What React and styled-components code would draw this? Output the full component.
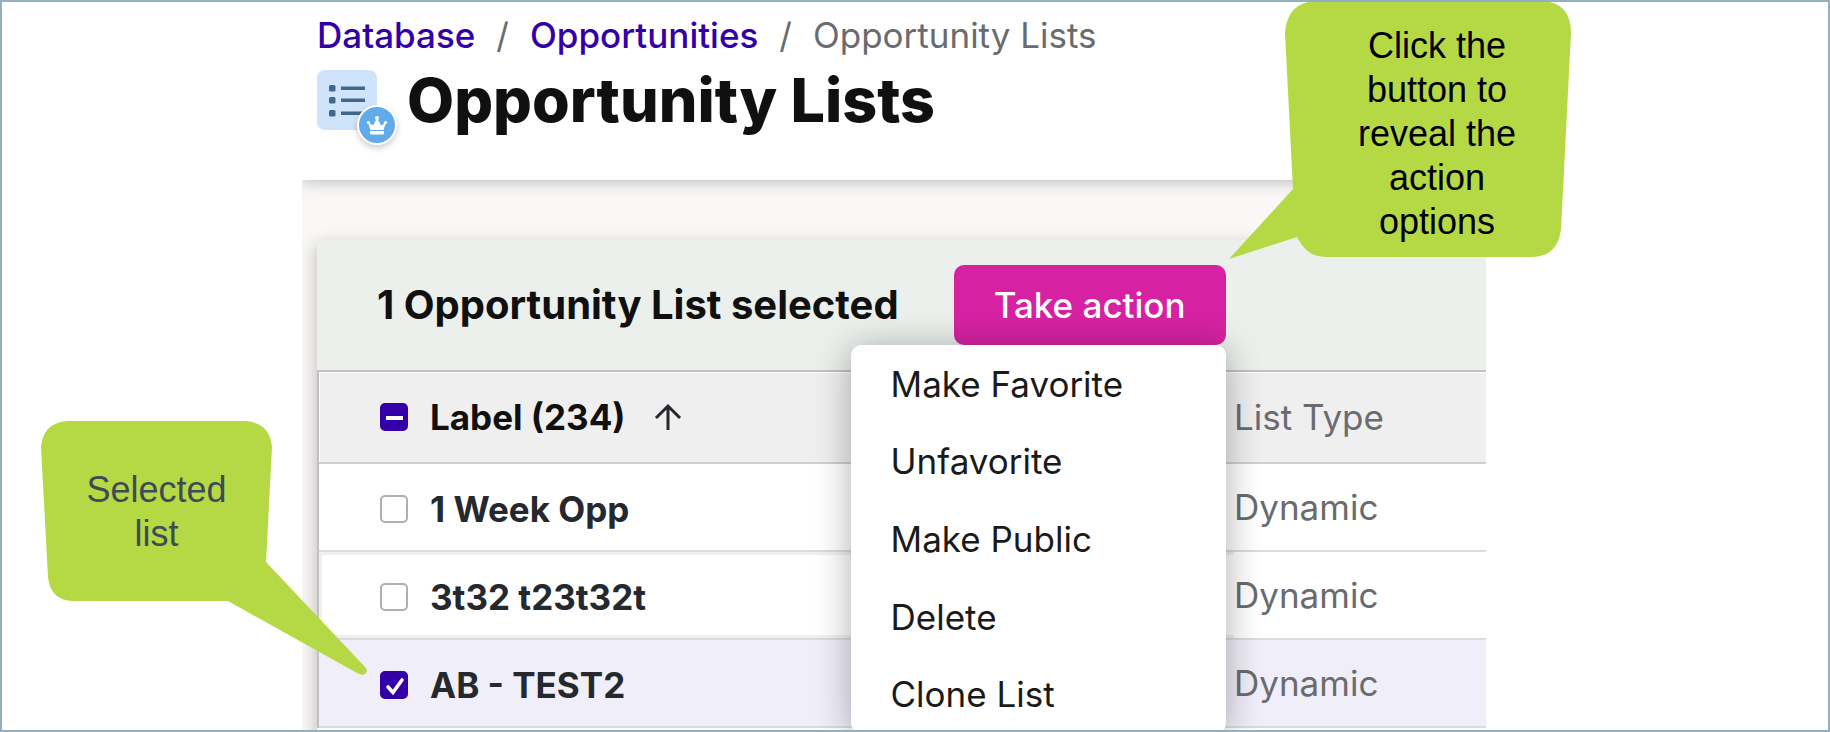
// App.jsx

import React, { useEffect, useRef, useState } from 'react';
import styled, { createGlobalStyle, css } from 'styled-components';

const GlobalStyle = createGlobalStyle`
    *, *::before, *::after { box-sizing: border-box; }
    body { margin: 0; background: #fff; font-family: Inter, "Liberation Sans", sans-serif; font-size: 35px; line-height: 44px; }
    button, input { font: inherit; }
`;

const Page = styled.div` position: relative; display: grid; grid-template-columns: 300px minmax(0, 1fr) 342px; height: 100vh; overflow: hidden; background: #fff; border: 2px solid #93b0bf; `;
const Screen = styled.main` grid-column: 2; min-width: 0; height: 100%; overflow: hidden; display: flex; flex-direction: column; `;

const Header = styled.header` position: relative; z-index: 1; flex: none; min-height: 178px; padding: 11px 15px 0; background: #fff; box-shadow: 0 0 16px rgba(0, 0, 0, 0.3); `;
const Breadcrumbs = styled.nav` display: flex; gap: 21px; color: #6a6b6f; white-space: nowrap; `;
const Crumb = styled.a` color: #3300a8; font-weight: 500; text-decoration: none; `;
const TitleRow = styled.div` display: flex; align-items: center; gap: 30px; margin-top: 13px; `;
const Title = styled.h1` margin: 0; color: #101010; font-size: 61px; line-height: 60px; font-weight: 800; white-space: nowrap; `;
const ListBadge = styled.div` position: relative; width: 60px; height: 60px; border-radius: 8px; background: #cfe4fa; `;
const Crown = styled.span` position: absolute; right: -20px; bottom: -15px; width: 40px; height: 40px; border: 2px solid #fff; border-radius: 50%; background: #62abea; box-shadow: 0 3px 6px rgba(0, 0, 0, 0.2); `;

const Content = styled.div` flex: 1 0 auto; padding: 60px 0 0 15px; background: #f9f8f6; `;
const Panel = styled.section` padding-bottom: 20px; background: #fff; box-shadow: 0 6px 16px rgba(40, 20, 20, 0.3); `;
const ActionBar = styled.div` display: flex; align-items: center; gap: 55px; height: 130px; padding: 0 60px; background: #ebf0ec; `;
const SelectionTitle = styled.h2` margin: 0; color: #101010; font-size: 40px; line-height: 44px; font-weight: 700; white-space: nowrap; `;
const ActionWrap = styled.div` position: relative; z-index: 2; `;
const ActionButton = styled.button` height: 80px; padding: 0 40px; border: none; border-radius: 10px; background: #d622a2; color: #fff; font-weight: 500; white-space: nowrap; cursor: pointer; `;
const Menu = styled.div` position: absolute; top: 100%; right: 0; display: grid; grid-auto-rows: 1fr; width: 375px; height: 388px; border-radius: 10px; background: #fff; box-shadow: 0 4px 36px rgba(0, 0, 0, 0.32); `;
const MenuItem = styled.button` padding: 0 40px; border: none; background: none; color: #1a1a1a; text-align: left; cursor: pointer; `;

const Table = styled.table` width: 100%; table-layout: fixed; border-collapse: separate; border-spacing: 0; border-top: 2px solid #bcc2c8; border-left: 2px solid #bcc2c8; `;
const cell = css` padding: 0 0 0 61px; text-align: left; font-weight: 400; vertical-align: middle; white-space: nowrap; `;
const HeadCell = styled.th` ${cell} height: 92px; background: #efefef; border-bottom: 2px solid #cfcfcf; box-shadow: inset 1px 1px 0 #fff; `;
const HeadContent = styled.div` display: flex; align-items: center; gap: 28px; `;
const TypeHead = styled(HeadCell)` width: 252px; padding: 0; color: #6a6b6f; box-shadow: inset 0 1px 0 #fff; `;
const Row = styled.tr` background: ${({ $selected }) => ($selected ? '#f0eef8' : '#fff')}; `;
const NameCell = styled.td` ${cell} height: 88px; padding-top: 4px; border-bottom: 2px solid #d9dcde; box-shadow: ${({ $focused }) => ($focused ? 'inset 3px 3px 0 #eef1ec, inset 0 -3px 0 #eef1ec' : 'none')}; `;
const TypeCell = styled.td` ${cell} padding: 0; color: #6a6b6f; border-bottom: 2px solid #d9dcde; `;
const Label = styled.label` display: flex; align-items: center; gap: 22px; color: ${({ $head }) => ($head ? '#101010' : '#25282c')}; font-weight: 700; cursor: pointer; `;
const SortButton = styled.button` display: flex; padding: 0; border: none; background: none; cursor: pointer; `;

const CheckWrap = styled.span` display: grid; width: 28px; height: 28px; > * { grid-area: 1 / 1; } svg { pointer-events: none; } `;
const CheckInput = styled.input` appearance: none; width: 28px; height: 28px; margin: 0; border: 2px solid #aeaeb3; border-radius: 5px; background: #fff; &:checked, &:indeterminate { border-color: #3300a8; background: #3300a8; } `;

const Callout = styled.aside` position: absolute; z-index: 3; top: ${({ $top }) => $top}px; left: ${({ $left }) => $left}px; width: ${({ $width }) => $width}px; padding: ${({ $pad }) => $pad}; color: ${({ $color }) => $color}; font-family: "Liberation Sans", Arial, sans-serif; font-size: 36px; text-align: center; pointer-events: none; `;
const CalloutShape = styled.svg` position: absolute; top: 0; left: 0; z-index: -1; overflow: visible; fill: #b5d945; `;

const ACTIONS = ['Make Favorite', 'Unfavorite', 'Make Public', 'Delete', 'Clone List'];

const LISTS = [
    { id: 1, name: '1 Week Opp', type: 'Dynamic' },
    { id: 2, name: '3t32 t23t32t', type: 'Dynamic', focused: true },
    { id: 3, name: 'AB - TEST2', type: 'Dynamic' }
];

const Checkbox = ({ id, checked, indeterminate, onChange }) => {
    const ref = useRef(null);

    useEffect(() => { ref.current.indeterminate = !!indeterminate; }, [indeterminate]);

    return (
        <CheckWrap>
            <CheckInput ref={ref} id={id} type="checkbox" checked={checked} onChange={onChange} />
            {indeterminate && (
                <svg width="28" height="28"><path d="M6 15h17" stroke="#fff" strokeWidth="4" /></svg>
            )}
            {checked && (
                <svg width="28" height="28"><path d="M8 16l5 5.5L22 9" fill="none" stroke="#fff" strokeWidth="3.6" strokeLinecap="round" /></svg>
            )}
        </CheckWrap>
    );
};

const ListIcon = () => (
    <ListBadge>
        <svg width="60" height="60" fill="#3f698b">
            {[15, 27, 40].map((y) => (
                <g key={y}>
                    <rect x="12" y={y} width="6.5" height="6.5" rx="1.5" />
                    <rect x="24" y={y + 1.5} width="24" height="3.5" />
                </g>
            ))}
        </svg>
        <Crown>
            <svg width="36" height="36" fill="#fff">
                <circle cx="18" cy="11" r="2" />
                <circle cx="9.5" cy="15.5" r="1.6" />
                <circle cx="26.5" cy="15.5" r="1.6" />
                <path d="M9 15.5l5 3L18 11l4 7.5 5-3-2.5 7.5h-13z" />
                <path d="M11 24h14v2q0 1.5-1.5 1.5h-11Q11 27.5 11 26z" />
            </svg>
        </Crown>
    </ListBadge>
);

const App = () => {
    const [selected, setSelected] = useState([3]);
    const [open, setOpen] = useState(true);

    const toggle = (id) => setSelected((ids) => (ids.includes(id) ? ids.filter((i) => i !== id) : [...ids, id]));
    const all = selected.length === LISTS.length;
    const toggleAll = () => setSelected(all ? [] : LISTS.map((list) => list.id));

    return (
        <Page>
            <GlobalStyle />
            <Screen>
                <Header>
                    <Breadcrumbs aria-label="Breadcrumb">
                        <Crumb href="#database">Database</Crumb>
                        <span>/</span>
                        <Crumb href="#opportunities">Opportunities</Crumb>
                        <span>/</span>
                        <span>Opportunity Lists</span>
                    </Breadcrumbs>
                    <TitleRow>
                        <ListIcon />
                        <Title>Opportunity Lists</Title>
                    </TitleRow>
                </Header>
                <Content>
                    <Panel>
                        <ActionBar>
                            <SelectionTitle>{selected.length} Opportunity List selected</SelectionTitle>
                            <ActionWrap>
                                <ActionButton type="button" onClick={() => setOpen(!open)}>Take action</ActionButton>
                                {open && (
                                    <Menu>
                                        {ACTIONS.map((action) => (
                                            <MenuItem key={action} type="button">{action}</MenuItem>
                                        ))}
                                    </Menu>
                                )}
                            </ActionWrap>
                        </ActionBar>
                        <Table>
                            <thead>
                                <tr>
                                    <HeadCell>
                                        <HeadContent>
                                            <Label $head htmlFor="all">
                                                <Checkbox id="all" checked={all} indeterminate={selected.length > 0 && !all} onChange={toggleAll} />
                                                Label (234)
                                            </Label>
                                            <SortButton type="button" aria-label="Sort">
                                                <svg width="28" height="28" fill="none" stroke="#25282c" strokeWidth="3">
                                                    <path d="M14 27V3M2 15L14 3l12 12" />
                                                </svg>
                                            </SortButton>
                                        </HeadContent>
                                    </HeadCell>
                                    <TypeHead>List Type</TypeHead>
                                </tr>
                            </thead>
                            <tbody>
                                {LISTS.map(({ id, name, type, focused }) => (
                                    <Row key={id} $selected={selected.includes(id)}>
                                        <NameCell $focused={focused}>
                                            <Label htmlFor={`list-${id}`}>
                                                <Checkbox id={`list-${id}`} checked={selected.includes(id)} onChange={() => toggle(id)} />
                                                {name}
                                            </Label>
                                        </NameCell>
                                        <TypeCell>{type}</TypeCell>
                                    </Row>
                                ))}
                            </tbody>
                        </Table>
                    </Panel>
                </Content>
            </Screen>

            <Callout $top={-1} $left={1227} $width={344} $pad="23px 50px 12px 122px" $color="#000">
                <CalloutShape width="344" height="260">
                    <path d="M86 0H314Q342 2 342 32L332 228Q329 256 302 256H96Q78 256 68 236L0 258L64 188L56 32Q58 2 86 0Z" />
                </CalloutShape>
                Click the button to reveal the action options
            </Callout>
            <Callout $top={419} $left={39} $width={231} $pad="47px 40px" $color="#3d4b57">
                <CalloutShape width="326" height="254">
                    <path d="M26 0H205Q229 2 231 26L225 141L325 247Q327 251 324 253Q321 255 316 252L187 180H32Q9 179 7 156L0 26Q2 2 26 0Z" />
                </CalloutShape>
                Selected list
            </Callout>
        </Page>
    );
};

export default App;
